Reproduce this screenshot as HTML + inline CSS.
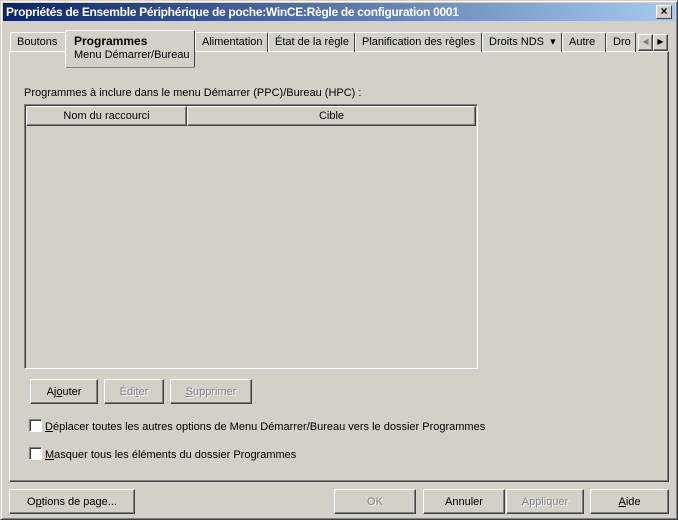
<!DOCTYPE html><html><head><meta charset="utf-8"><style>
*{box-sizing:border-box;margin:0;padding:0}
body{width:678px;height:520px;background:#d4d0c8;font:11px "Liberation Sans",sans-serif;letter-spacing:0px;color:#000;position:relative;overflow:hidden}
.a{position:absolute}
.win{left:0;top:0;width:678px;height:520px;border:1px solid;border-color:#d4d0c8 #404040 #404040 #d4d0c8;box-shadow:inset 1px 1px #fff,inset -1px -1px #808080}
.title{left:3px;top:3px;width:672px;height:18px;background:linear-gradient(90deg,#0a246a,#a6caf0);color:#fff;font-weight:bold;font-size:12px;letter-spacing:-0.3px;line-height:18px;padding-left:3px}
.x{left:656px;top:5px;width:16px;height:14px;background:#d4d0c8;border:1px solid;border-color:#fff #404040 #404040 #fff;text-align:center;line-height:11px;font-size:12px;font-weight:bold;color:#000}
.tab{top:32px;height:20px;border:1px solid;border-color:#fff #404040 transparent #fff;border-bottom:none;line-height:19px;padding-left:6px;border-radius:2px 2px 0 0}
.panel{left:9px;top:51px;width:660px;height:431px;border:1px solid;border-color:#fff #404040 #404040 #fff;box-shadow:inset -1px -1px #808080}
.btn{height:25px;border:1px solid;border-color:#fff #404040 #404040 #fff;box-shadow:inset -1px -1px #808080;text-align:center;line-height:24px}
.dis{color:#808080;text-shadow:1px 1px #fff}
.cb{width:13px;height:13px;background:#fff;border:1px solid;border-color:#808080 #fff #fff #808080;box-shadow:inset 1px 1px #404040}
u{text-decoration:underline}
</style></head><body>
<div class="a win"></div>
<div class="a title">Propriétés de Ensemble Périphérique de poche:WinCE:Règle de configuration 0001</div>
<div class="a x">×</div>
<div class="a panel"></div>
<div class="a tab" style="left:10px;width:56px">Boutons</div>
<div class="a tab" style="left:195px;width:73px">Alimentation</div>
<div class="a tab" style="left:268px;width:87px">État de la règle</div>
<div class="a tab" style="left:355px;width:127px">Planification des règles</div>
<div class="a tab" style="left:482px;width:80px">Droits NDS &nbsp;▾</div>
<div class="a tab" style="left:562px;width:44px">Autre</div>
<div class="a tab" style="left:606px;width:30px;overflow:hidden">Dro</div>
<div class="a" style="left:65px;top:30px;width:130px;height:38px;background:#d4d0c8;border:1px solid;border-color:#fff #404040 #808080 #fff;border-radius:2px;padding:4px 0 0 8px;line-height:13px"><b style="font-size:12px">Programmes</b><br>Menu Démarrer/Bureau</div>
<div class="a btn" style="left:638px;top:34px;width:15px;height:17px;line-height:14px;font-size:8px;color:#808080">◀</div>
<div class="a btn" style="left:653px;top:34px;width:15px;height:17px;line-height:14px;font-size:8px">▶</div>
<div class="a" style="left:24px;top:87px">Programmes à inclure dans le menu Démarrer (PPC)/Bureau (HPC) :</div>
<div class="a" style="left:24px;top:104px;width:454px;height:265px;border:1px solid;border-color:#808080 #fff #fff #808080;box-shadow:inset 1px 1px #404040"></div>
<div class="a btn" style="left:26px;top:106px;width:161px;height:20px;line-height:19px">Nom du raccourci</div>
<div class="a btn" style="left:187px;top:106px;width:289px;height:20px;line-height:19px">Cible</div>
<div class="a btn" style="left:30px;top:379px;width:68px">Aj<u>o</u>uter</div>
<div class="a btn dis" style="left:104px;top:379px;width:60px">Édi<u>t</u>er</div>
<div class="a btn dis" style="left:170px;top:379px;width:82px"><u>S</u>upprimer</div>
<div class="a cb" style="left:29px;top:419px"></div>
<div class="a" style="left:45px;top:421px"><u>D</u>éplacer toutes les autres options de Menu Démarrer/Bureau vers le dossier Programmes</div>
<div class="a cb" style="left:29px;top:447px"></div>
<div class="a" style="left:45px;top:449px"><u>M</u>asquer tous les éléments du dossier Programmes</div>
<div class="a btn" style="left:9px;top:489px;width:126px">O<u>p</u>tions de page...</div>
<div class="a btn dis" style="left:334px;top:489px;width:82px">OK</div>
<div class="a btn" style="left:423px;top:489px;width:82px">Annuler</div>
<div class="a btn dis" style="left:506px;top:489px;width:78px">Appliquer</div>
<div class="a btn" style="left:590px;top:489px;width:79px"><u>A</u>ide</div>
</body></html>
